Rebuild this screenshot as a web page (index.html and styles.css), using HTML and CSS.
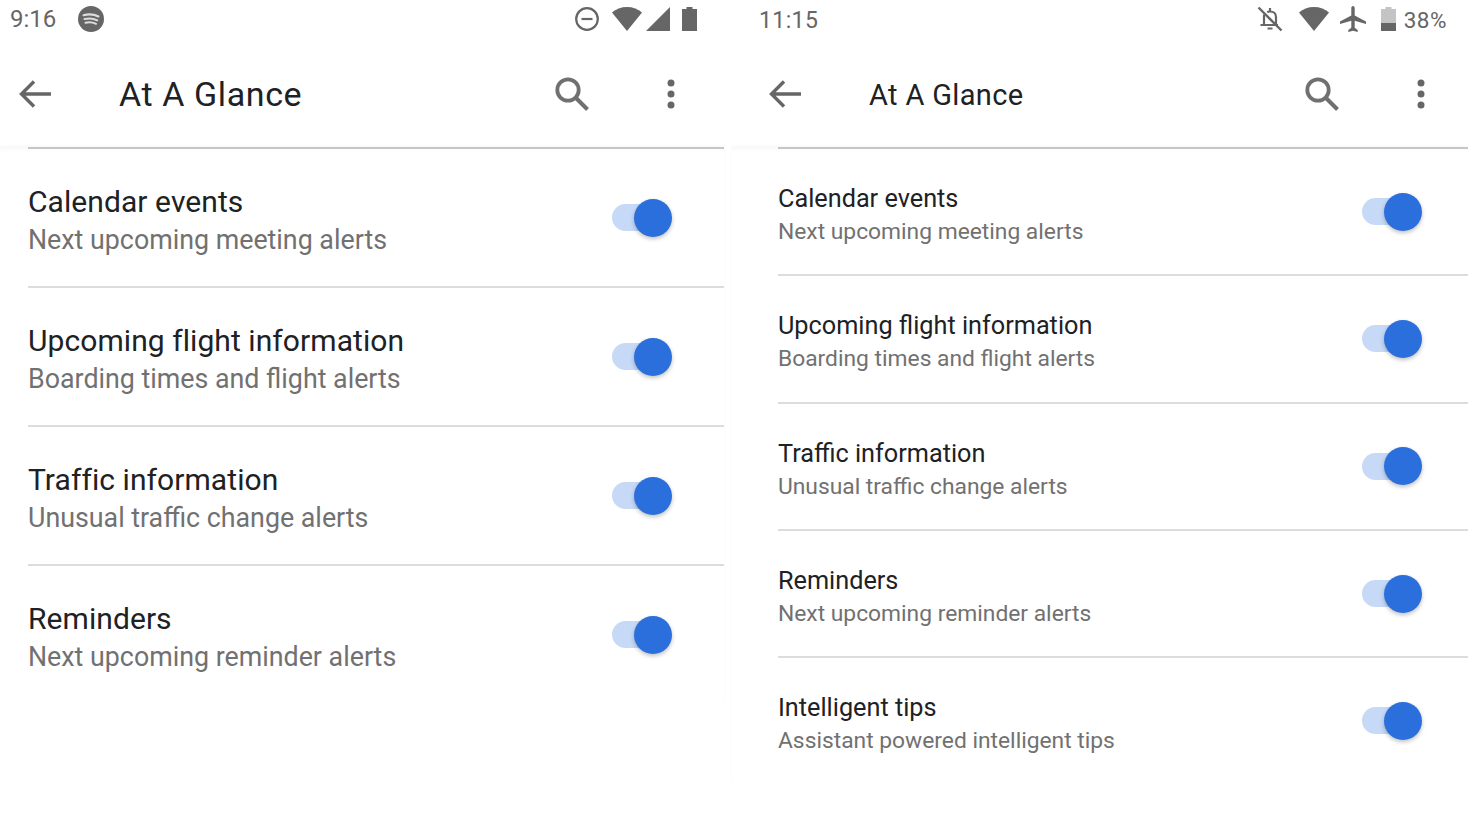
FILE: index.html
```html
<!DOCTYPE html>
<html lang="en">
<head>
    <meta charset="UTF-8">
    <meta name="viewport" content="width=device-width, initial-scale=1.0">
    <title>At A Glance</title>
    <link rel="stylesheet" href="styles.css">
</head>
<body>

<div class="screens">

    <!-- Left phone -->
    <section class="phone phone-left">
        <div class="status-bar">
            <span class="clock">9:16</span>
            <svg class="spotify" viewBox="0 0 26 26"><circle cx="13" cy="13" r="13" fill="#666"/><path d="M5.500 9.200c5-1.300 10.500-1 15 1.300M6.500 13c4.300-1 9-.7 12.800 1.300M7.500 16.700c3.500-.8 7.300-.5 10.500 1.100" fill="none" stroke="#ddd" stroke-width="2" stroke-linecap="round"/></svg>
            <div class="status-icons">
                <svg class="i-dnd" viewBox="0 0 24 24"><circle cx="12" cy="12" r="10.800" fill="none" stroke="#666" stroke-width="2.200"/><path d="M6.500 12h11" stroke="#666" stroke-width="2.200"/></svg>
                <svg class="i-wifi" viewBox="0 0 30 24"><path d="M0 5.500C4 2 9 0 15 0s11 2 15 5.500L15 24z" fill="#666"/></svg>
                <svg class="i-signal" viewBox="0 0 24 24"><path d="M24 0v24H0z" fill="#666"/></svg>
                <svg class="i-battery" viewBox="0 0 15 24"><path d="M4.500 0h6v2H15v22H0V2h4.500z" fill="#666"/></svg>
            </div>
        </div>
        <header class="toolbar">
            <svg class="i-back" viewBox="0 0 32 28"><path d="M32 14H3M15 1.500 2.500 14 15 26.500" fill="none" stroke="#666" stroke-width="3.400"/></svg>
            <h1>At A Glance</h1>
            <svg class="i-search" viewBox="0 0 34 34"><circle cx="13" cy="13" r="10.700" fill="none" stroke="#707070" stroke-width="3.800"/><path d="M21 21l11.500 11.500" stroke="#707070" stroke-width="4"/></svg>
            <svg class="i-more" viewBox="0 0 8 30"><circle cx="4" cy="4" r="3.500" fill="#666"/><circle cx="4" cy="15" r="3.500" fill="#666"/><circle cx="4" cy="26" r="3.500" fill="#666"/></svg>
        </header>
        <ul class="settings">
            <li class="row">
                <div class="row-text"><h2>Calendar events</h2><p>Next upcoming meeting alerts</p></div>
                <div class="switch"><span class="knob"></span></div>
            </li>
            <li class="row">
                <div class="row-text"><h2>Upcoming flight information</h2><p>Boarding times and flight alerts</p></div>
                <div class="switch"><span class="knob"></span></div>
            </li>
            <li class="row">
                <div class="row-text"><h2>Traffic information</h2><p>Unusual traffic change alerts</p></div>
                <div class="switch"><span class="knob"></span></div>
            </li>
            <li class="row">
                <div class="row-text"><h2>Reminders</h2><p>Next upcoming reminder alerts</p></div>
                <div class="switch"><span class="knob"></span></div>
            </li>
        </ul>
    </section>

    <!-- Right phone -->
    <section class="phone phone-right">
        <div class="status-bar">
            <span class="clock">11:15</span>
            <div class="status-icons">
                <svg class="i-bell" viewBox="0 0 26 26"><path d="M7 8.500V19H3.500M7 19h14M19 19v-8c0-3-2-5.500-6-5.500-1 0-2 .2-2.800.6M13 2v3.500M10.500 22.500h5" fill="none" stroke="#666" stroke-width="2.200"/><path d="M1.500 1.500l23 23" stroke="#666" stroke-width="2.400"/></svg>
                <svg class="i-wifi" viewBox="0 0 30 24"><path d="M0 5.500C4 2 9 0 15 0s11 2 15 5.500L15 24z" fill="#666"/></svg>
                <svg class="i-plane" viewBox="0 0 26 26"><path d="M11.300 2c0-1 .7-2 1.700-2s1.700 1 1.700 2v7.500L26 15.500v2.500l-11.300-3.300v7l3 2.200V26L13 24.700 8.300 26v-2.100l3-2.200v-7L0 18v-2.500l11.300-6z" fill="#666"/></svg>
                <svg class="i-battery" viewBox="0 0 15 24"><path d="M4.500 0h6v2H15v22H0V2h4.500z" fill="#c4c4c4"/><path d="M0 16h15v8H0z" fill="#666"/></svg>
                <span class="percent">38%</span>
            </div>
        </div>
        <header class="toolbar">
            <svg class="i-back" viewBox="0 0 32 28"><path d="M32 14H3M15 1.500 2.500 14 15 26.500" fill="none" stroke="#666" stroke-width="3.400"/></svg>
            <h1>At A Glance</h1>
            <svg class="i-search" viewBox="0 0 34 34"><circle cx="13" cy="13" r="10.700" fill="none" stroke="#707070" stroke-width="3.800"/><path d="M21 21l11.500 11.500" stroke="#707070" stroke-width="4"/></svg>
            <svg class="i-more" viewBox="0 0 8 30"><circle cx="4" cy="4" r="3.500" fill="#666"/><circle cx="4" cy="15" r="3.500" fill="#666"/><circle cx="4" cy="26" r="3.500" fill="#666"/></svg>
        </header>
        <ul class="settings">
            <li class="row">
                <div class="row-text"><h2>Calendar events</h2><p>Next upcoming meeting alerts</p></div>
                <div class="switch"><span class="knob"></span></div>
            </li>
            <li class="row">
                <div class="row-text"><h2>Upcoming flight information</h2><p>Boarding times and flight alerts</p></div>
                <div class="switch"><span class="knob"></span></div>
            </li>
            <li class="row">
                <div class="row-text"><h2>Traffic information</h2><p>Unusual traffic change alerts</p></div>
                <div class="switch"><span class="knob"></span></div>
            </li>
            <li class="row">
                <div class="row-text"><h2>Reminders</h2><p>Next upcoming reminder alerts</p></div>
                <div class="switch"><span class="knob"></span></div>
            </li>
            <li class="row">
                <div class="row-text"><h2>Intelligent tips</h2><p>Assistant powered intelligent tips</p></div>
                <div class="switch"><span class="knob"></span></div>
            </li>
        </ul>
    </section>

</div>

</body>
</html>
```

FILE: styles.css
```css
html, body {
    margin: 0;
    height: 100%;
    background-color: #fff;
    overflow: hidden;
}
body {
    font-family: Roboto, "Liberation Sans", sans-serif;
    color: #202124;
}
.screens {
    display: flex;
    gap: 8px;
    height: 832px;
}
.phone {
    display: flex;
    flex-direction: column;
}
.phone-left {
    width: 724px;
    --inset: 28px;
    --title-size: 34px;
    --title-spacing: 0.6px;
    --row-height: 139px;
    --label-size: 30px;
    --label-spacing: 0.07px;
    --sub-size: 26.800px;
    --label-line: 38px;
    --switch-end: 52px;
    --toolbar-end: 49px;
}
.phone-right {
    flex: 1;
    --inset: 46px;
    --title-size: 29px;
    --title-spacing: 0.35px;
    --row-height: 127.300px;
    --label-size: 25.250px;
    --label-spacing: 0;
    --sub-size: 22.800px;
    --label-line: 33px;
    --switch-end: 46px;
    --toolbar-end: 43px;
}

/* Status bar */
.status-bar {
    display: flex;
    align-items: center;
    height: 38px;
    color: #666;
    flex-shrink: 0;
}
.phone-left .status-bar {
    padding: 0 27px 0 10px;
}
.phone-right .status-bar {
    padding: 0 21px 0 27px;
}
.clock {
    font-size: 24px;
}
.phone-right .clock {
    padding-top: 2px;
    font-size: 23px;
    letter-spacing: 0.4px;
}
.spotify {
    width: 26px;
    height: 26px;
    margin-left: 22px;
}
.status-icons {
    display: flex;
    align-items: center;
    margin-left: auto;
}
.i-dnd { width: 24px; height: 24px; }
.i-wifi { width: 30px; height: 24px; margin-left: 13px; }
.i-signal { width: 24px; height: 24px; margin-left: 4px; }
.i-battery { width: 15px; height: 24px; margin-left: 12px; }
.i-bell { width: 26px; height: 26px; }
.phone-right .i-wifi { margin-left: 16px; }
.i-plane { width: 26px; height: 26px; margin-left: 11px; }
.phone-right .i-battery { margin-left: 15px; }
.percent {
    padding-top: 2px;
    font-size: 22.500px;
    margin-left: 8px;
    letter-spacing: 0.5px;
}

/* Toolbar */
.toolbar {
    display: flex;
    align-items: center;
    box-sizing: border-box;
    height: 109px;
    padding: 3px var(--toolbar-end) 0 19px;
    flex-shrink: 0;
}
.phone-right .toolbar {
    padding-left: 37px;
}
.i-back {
    width: 32px;
    height: 28px;
    flex-shrink: 0;
}
.toolbar h1 {
    margin: 0 0 0 68px;
    font-size: var(--title-size);
    font-weight: 400;
    letter-spacing: var(--title-spacing);
    flex: 1;
}
.phone-right .toolbar h1 {
    padding-top: 2px;
}
.i-search {
    width: 34px;
    height: 34px;
}
.i-more {
    width: 8px;
    height: 30px;
    margin-left: 78px;
}

/* Rows */
.settings {
    list-style: none;
    margin: 0;
    padding: 0;
    box-shadow: 0 -1px 3px rgba(0, 0, 0, 0.03), inset 0 5px 5px -4px rgba(0, 0, 0, 0.05);
}
.row {
    display: flex;
    align-items: center;
    justify-content: space-between;
    box-sizing: border-box;
    height: var(--row-height);
    margin-left: var(--inset);
    padding-right: var(--switch-end);
    border-top: 2px solid #dcdcdc;
}
.row:first-child {
    border-top-color: #c6c6c6;
}
.row-text {
    padding-top: 7px;
}
.row h2 {
    margin: 0;
    font-size: var(--label-size);
    font-weight: 400;
    letter-spacing: var(--label-spacing);
    line-height: var(--label-line);
}
.row p {
    margin: 0;
    font-size: var(--sub-size);
    color: #717171;
    line-height: var(--label-line);
}

/* Toggle */
.switch {
    position: relative;
    width: 48px;
    height: 27px;
    margin-right: 12px;
    border-radius: 14px;
    background-color: #c6d9f7;
}
.knob {
    position: absolute;
    top: -5.500px;
    right: -12px;
    width: 38px;
    height: 38px;
    border-radius: 50%;
    background-color: #2a6fdc;
    box-shadow: 0 2px 4px rgba(0, 0, 0, 0.25);
}
```
